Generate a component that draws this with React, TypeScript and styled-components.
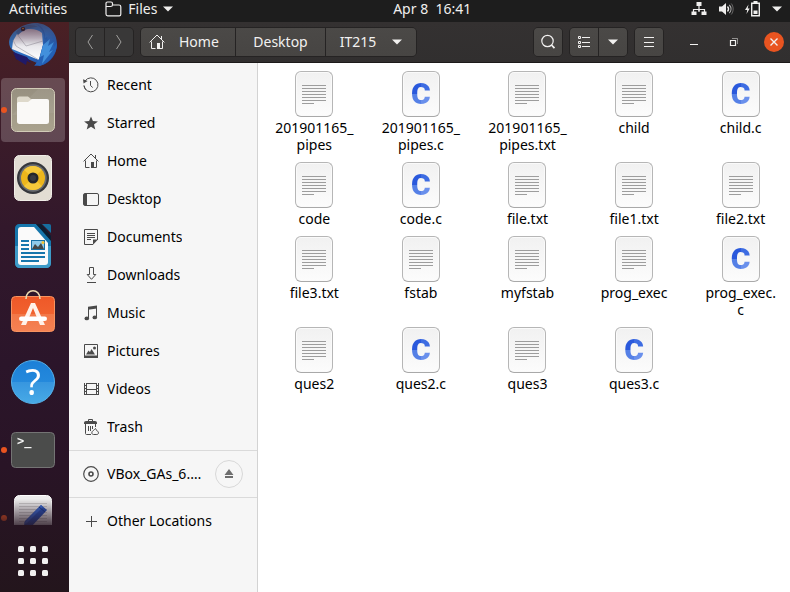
import React from "react";
import styled, { createGlobalStyle, css } from "styled-components";

const GlobalStyle = createGlobalStyle`
  *, *::before, *::after { box-sizing: border-box; }
  html, body, #root { height: 100%; }
  body {
    margin: 0;
    overflow: hidden;
    font-family: "Noto Sans", "Open Sans", sans-serif;
    font-size: 14px;
    line-height: 18px;
    background: #1d1d1d;
  }
  button {
    font: inherit;
    color: inherit;
    background: none;
    border: 0;
    padding: 0;
    margin: 0;
    cursor: pointer;
  }
  svg { display: block; flex: none; overflow: visible; }
`;

/* ---------- shell ---------- */

const Screen = styled.div`
  display: flex;
  flex-direction: column;
  height: 100vh;
`;

const TopBar = styled.header`
  display: flex;
  flex: none;
  align-items: center;
  justify-content: space-between;
  padding: 0 8px 4px 9px;
  background: #1d1d1d;
  color: #f0efee;
`;

const TopGroup = styled.div<{ $gap: number }>`
  display: flex;
  align-items: center;
  gap: ${(p) => p.$gap}px;
`;

const TopButton = styled.button`
  display: flex;
  align-items: center;
  gap: 6px;
  white-space: pre;
`;

const Workspace = styled.div`
  display: flex;
  flex: 1;
  min-height: 0;
`;

/* ---------- dock ---------- */

const Dock = styled.nav`
  display: flex;
  flex: none;
  flex-direction: column;
  width: 69px;
  background: linear-gradient(180deg, #4a2024 0%, #3c1c29 18%, #32182b 36%, #2b152a 60%, #291426 78%, #23151c 100%);
`;

const DockList = styled.div`
  display: flex;
  flex: 1;
  flex-direction: column;
  gap: 4px;
  min-height: 0;
  padding-left: 1px;
  overflow: hidden;
  mask-image: linear-gradient(180deg, rgba(0, 0, 0, 0.5), #000 24px, #000 calc(100% - 26px), rgba(0, 0, 0, 0.2));

  & > :first-child { margin-top: -12px; }
`;

const DockItem = styled.button<{ $active?: boolean; $running?: boolean }>`
  position: relative;
  display: flex;
  flex: none;
  align-items: center;
  justify-content: center;
  width: 64px;
  height: 64px;
  border-radius: 4px;
  background: ${(p) => (p.$active ? "rgba(255, 255, 255, 0.2)" : "none")};

  ${(p) =>
    p.$running &&
    css`
      &::before {
        content: "";
        position: absolute;
        left: 0;
        top: 29px;
        width: 6px;
        height: 6px;
        border-radius: 50%;
        background: #e95420;
      }
    `}
`;

const AppsButton = styled.button`
  display: flex;
  flex: none;
  justify-content: center;
  width: 66px;
  padding: 20px 0 15px;
`;

/* ---------- window ---------- */

const Window = styled.main`
  display: flex;
  flex: 1;
  flex-direction: column;
  min-width: 0;
`;

const HeaderBar = styled.div`
  display: flex;
  flex: none;
  align-items: center;
  gap: 6px;
  height: 41px;
  padding: 0 6px 1px;
  background: linear-gradient(180deg, #343131, #312f2f);
  border-bottom: 1px solid #1c1a1a;
  color: #f2f1f0;
`;

const ButtonGroup = styled.div`
  display: flex;
  flex: none;
  height: 30px;
  border: 1px solid #252323;
  border-radius: 5px;
  overflow: hidden;
  background: #252323;
  gap: 1px;
`;

const HeaderButton = styled.button<{ $dim?: boolean; $width?: number }>`
  display: flex;
  align-items: center;
  justify-content: center;
  gap: 16px;
  width: ${(p) => p.$width ?? 28}px;
  background: ${(p) => (p.$dim ? "#393838" : "linear-gradient(180deg, #4b4947, #474543)")};
  color: ${(p) => (p.$dim ? "#a09f9d" : "#f2f1f0")};
`;

const HomeButton = styled(HeaderButton)`
  justify-content: flex-start;
  gap: 14px;
  padding: 0 8px;
`;

const Spacer = styled.div`
  flex: 1;
`;

const WindowControls = styled.div`
  display: flex;
  flex: none;
  align-items: center;
  gap: 20px;
  margin-left: 14px;
`;

const ControlButton = styled.button<{ $close?: boolean }>`
  display: flex;
  align-items: center;
  justify-content: center;
  width: 20px;
  height: 20px;
  border-radius: 50%;
  background: ${(p) => (p.$close ? "#e95420" : "none")};
`;

const Body = styled.div`
  display: flex;
  flex: 1;
  min-height: 0;
`;

/* ---------- sidebar ---------- */

const Sidebar = styled.aside`
  flex: none;
  width: 189px;
  padding-top: 3px;
  background: #f6f6f6;
  border-right: 1px solid #d3d3d3;
  color: #000000;
`;

const PlaceRow = styled.div`
  display: flex;
  align-items: center;
  height: 38px;
  padding: 0 14px;
`;

const PlaceButton = styled.button`
  display: flex;
  flex: 1;
  align-items: center;
  gap: 8px;
  height: 100%;
  min-width: 0;
  text-align: left;
  color: inherit;

  svg { color: #4a4a4a; }
`;

const PlaceLabel = styled.span`
  overflow: hidden;
  white-space: nowrap;
`;

const Divider = styled.hr`
  height: 1px;
  margin: 4px 0;
  border: 0;
  background: #dadada;
`;

const EjectButton = styled.button`
  display: flex;
  flex: none;
  align-items: center;
  justify-content: center;
  width: 28px;
  height: 28px;
  border: 1px solid #d8d8d8;
  border-radius: 50%;
  color: #6e6e6e;
`;

/* ---------- file grid ---------- */

const FileGrid = styled.div`
  display: grid;
  flex: 1;
  grid-template-columns: repeat(5, minmax(0, 1fr));
  align-content: start;
  column-gap: 12px;
  row-gap: 9px;
  padding: 8px 2px 0 9px;
  background: #ffffff;
  color: #000000;
`;

const FileItem = styled.button`
  display: flex;
  flex-direction: column;
  align-items: center;
  justify-content: flex-start;
  gap: 2px;
  line-height: 17px;
`;

const Page = styled.span`
  display: flex;
  align-items: center;
  justify-content: center;
  width: 38px;
  height: 46px;
  border: 1px solid #b6b6b6;
  border-bottom-color: #a9a9a9;
  border-radius: 6px;
  background: linear-gradient(180deg, #f1f1f1, #fcfcfc);
  box-shadow: inset 0 0 0 1px #fafafa;
`;

const CLetter = styled.span`
  font: 900 30px/30px Roboto, sans-serif;
  color: transparent;
  background:
    linear-gradient(90deg, #2a59dc 50%, #3d6ce2 50%) 0 0 / 100% 50% no-repeat,
    linear-gradient(90deg, #5580e6 50%, #6a90ec 50%) 0 100% / 100% 50% no-repeat;
  background-clip: text;
  -webkit-background-clip: text;
`;

/* ---------- symbolic icons ---------- */

type IconProps = { children: React.ReactNode; size?: number };

const Symbolic = ({ children, size = 16 }: IconProps) => (
  <svg width={size} height={size} viewBox={`0 0 ${size} ${size}`} fill="none" stroke="currentColor" aria-hidden="true">
    {children}
  </svg>
);

const CaretIcon = () => (
  <svg width="10" height="6" viewBox="0 0 10 6" fill="currentColor" aria-hidden="true">
    <path d="M0 .5h10L5 5.5z" />
  </svg>
);

const HomeIcon = () => (
  <Symbolic>
    <path d="M.6 8.4 8 1l7.4 7.4M12.5 2v3.2M2.5 7.5v7h4M13.5 7.5v7H10" />
    <path d="M8 9h3v6H8z" fill="currentColor" stroke="none" />
  </Symbolic>
);

const RecentIcon = () => (
  <Symbolic>
    <path d="M2.1 4A7 7 0 1 1 1 8.6" />
    <path d="M1 8.6a7 7 0 0 0 2 4.3" />
    <path d="M7.5 4v4.5l2.2 2" />
    <path d="M0 2.2 4.6 4 .6 6.4z" fill="currentColor" stroke="none" />
  </Symbolic>
);

const StarIcon = () => (
  <Symbolic>
    <path
      d="m8 1.4 1.9 4.7 5 .3-3.9 3.2 1.3 4.9L8 11.8l-4.3 2.7L5 9.6 1.1 6.4l5-.3z"
      fill="currentColor"
      stroke="none"
    />
  </Symbolic>
);

const DesktopIcon = () => (
  <Symbolic>
    <rect x=".5" y="2.5" width="15" height="12" rx="1.5" />
    <path d="M1 3h3v11H1z" fill="currentColor" stroke="none" />
  </Symbolic>
);

const DocumentIcon = () => (
  <Symbolic>
    <path d="M10 15.5H1.5v-15h13v10.5" />
    <path d="M4 4.5h8M4 6.5h8M4 8.5h8M4 10.5h4" />
    <path d="M15 10.5h-5v5.3z" fill="currentColor" stroke="none" />
  </Symbolic>
);

const DownloadIcon = () => (
  <Symbolic>
    <path d="M6.5 .5h4v7h2.3L8.5 12.3 4.2 7.5h2.3zM4 15.5h9" />
  </Symbolic>
);

const MusicIcon = () => (
  <Symbolic>
    <path d="M5.5 13V2.5M13.5 12V1.5" />
    <path d="M5 1.800 14 .5v3L5 4.8z" fill="currentColor" stroke="none" />
    <ellipse cx="3.8" cy="13.4" rx="2.3" ry="1.9" fill="currentColor" stroke="none" />
    <ellipse cx="11.8" cy="12.4" rx="2.3" ry="1.9" fill="currentColor" stroke="none" />
  </Symbolic>
);

const PictureIcon = () => (
  <Symbolic>
    <path d="M1.5 14V1.5h13V14" />
    <path d="M1 12.5h14V15H1zM3 11.5l2.5-4 1.5 1.5 1.5-3 3.5 5.5z" fill="currentColor" stroke="none" />
    <circle cx="11.5" cy="5" r="1.5" fill="currentColor" stroke="none" />
  </Symbolic>
);

const VideoIcon = () => (
  <Symbolic>
    <path d="M3.5 2v12M13.5 2v12M3.5 2.5h10M3.5 8.5h10M3.5 13.5h10" />
    <path d="M1.5 2v12M15.5 2v12" strokeDasharray="2 1" />
    <path d="M1 4.500h2.500M1 7.500h2.500M1 10.500h2.500M1 13.500h2.500M13.500 4.500H16M13.500 7.500H16M13.500 10.500H16M13.500 13.500H16" />
  </Symbolic>
);

const TrashIcon = () => (
  <Symbolic>
    <path d="M5.5 2.5v-2h4v2" />
    <path d="M1 4c0-1.300.8-2 2-2h9c1.200 0 2 .7 2 2v1H1z" fill="currentColor" stroke="none" />
    <path d="M2.5 5v9.500c0 .6.4 1 1 1H8M5.500 7v5M7.500 7v5M9.500 7v3M12.500 5v3" />
    <path d="M12.500 9.500c-.6 1-3.700 2.500-3.700 4.300 0 1 .7 1.700 1.700 1.700h3.300c1 0 1.700-.7 1.700-1.700 0-1.500-2-1.700-3-4.300z" />
  </Symbolic>
);

const DiscIcon = () => (
  <Symbolic>
    <circle cx="8" cy="8" r="7.300" strokeWidth="1.200" />
    <circle cx="8" cy="8" r="2" strokeWidth="1.600" />
  </Symbolic>
);

const PlusIcon = () => (
  <Symbolic>
    <path d="M8.5 3v11M3 8.5h11" />
  </Symbolic>
);

const EjectIcon = () => (
  <svg width="10" height="10" viewBox="0 0 10 10" fill="currentColor" aria-hidden="true">
    <path d="M5 0l4.500 6h-9zM1 7h8v2H1z" />
  </svg>
);

const FolderIcon = () => (
  <svg width="17" height="16" viewBox="0 0 17 16" fill="none" stroke="currentColor" aria-hidden="true">
    <path
      d="M1 13V2.500C1 1.600 1.500 1 2.500 1H6c1 0 1.500.6 1.500 1.500V4H14c1.200 0 1.800.6 1.800 1.800v7.400c0 1-.6 1.600-1.600 1.600H2.700C1.600 14.800 1 14.200 1 13zM1 5.500h4.500c1.300 0 2-.6 2-1.500"
      strokeWidth="1.200"
    />
  </svg>
);

const NetworkIcon = () => (
  <Symbolic>
    <path d="M8 4v7M2.5 11V8.500h11V11" strokeWidth="1.200" />
    <path d="M5.500 1h5v4h-5zM.500 10.500h5V14h-5zM10.500 10.500h5V14h-5z" fill="currentColor" stroke="none" />
    <path d="M8 8v2" strokeWidth="1.200" />
  </Symbolic>
);

const VolumeIcon = () => (
  <Symbolic>
    <path d="M1 5.500h3L8 2v12l-4-3.500H1z" fill="currentColor" stroke="none" />
    <path d="M9.500 5.500c1.200 1.400 1.200 3.600 0 5" strokeWidth="1.300" />
    <path d="M11.300 3.800c2.200 2.400 2.200 6 0 8.400" strokeWidth="1.200" opacity=".7" />
    <path d="M13.200 2.500c2.600 3 2.600 8 0 11" opacity=".35" />
  </Symbolic>
);

const BatteryIcon = () => (
  <Symbolic>
    <path d="M3.500 3.500 0 9h2.200L1.500 13 4.700 7.500H2.700z" fill="currentColor" stroke="none" />
    <path d="M6.700 2.200h7.600v12.600H6.700z" strokeWidth="1.400" />
    <path d="M8.500 0h4v2h-4zM8.500 9.500h4v3.500h-4z" fill="currentColor" stroke="none" />
  </Symbolic>
);

const BackIcon = () => (
  <Symbolic>
    <path d="M10.500 1 6 8l4.500 7" />
  </Symbolic>
);

const ForwardIcon = () => (
  <Symbolic>
    <path d="m5.500 1 4.500 7-4.500 7" />
  </Symbolic>
);

const SearchIcon = () => (
  <Symbolic>
    <circle cx="7.5" cy="7" r="5.700" strokeWidth="1.200" />
    <path d="m11.500 11 3 3.200" strokeWidth="1.800" />
  </Symbolic>
);

const ListIcon = () => (
  <Symbolic>
    <path d="M2.500 2.500h2v2h-2zM2.500 7.500h2v2h-2zM2.500 11.500h2v2h-2zM6 3.500h8M6 8.500h8M6 12.500h8" />
  </Symbolic>
);

const MenuIcon = () => (
  <Symbolic>
    <path d="M3 3.500h10M3 8.500h10M3 12.500h10" />
  </Symbolic>
);

const MinimizeIcon = () => (
  <Symbolic>
    <path d="M4 10.500h8" />
  </Symbolic>
);

const RestoreIcon = () => (
  <Symbolic>
    <path d="M6 4.500h5.500V10" opacity=".5" />
    <path d="M4.500 6.500h5v5h-5z" strokeWidth="1.200" />
  </Symbolic>
);

const CloseIcon = () => (
  <Symbolic>
    <path d="m4.500 4.500 7 7m0-7-7 7" strokeWidth="1.400" />
  </Symbolic>
);

/* ---------- dock icons ---------- */

const ThunderbirdIcon = () => (
  <svg width="48" height="48" viewBox="0 0 48 48" aria-hidden="true">
    <defs>
      <linearGradient id="birdBody" x1="0" y1="0" x2="1" y2="1">
        <stop offset="0" stopColor="#3570b0" />
        <stop offset=".5" stopColor="#2d70c4" />
        <stop offset="1" stopColor="#1b3f94" />
      </linearGradient>
      <linearGradient id="birdMail" x1="0" y1="0" x2="0" y2="1">
        <stop offset="0" stopColor="#a79db4" />
        <stop offset=".5" stopColor="#e6e5ea" />
        <stop offset="1" stopColor="#ffffff" />
      </linearGradient>
    </defs>
    <path d="M25 5C37 4 48 13 48 26c0 11-7 18-14 21l-9 1 3-3-14-6C6 36 0 31 0 24 1 14 13 6 25 5z" fill="url(#birdBody)" />
    <path d="M4 34l3 7 10 6 1-4 4 2-4-6z" fill="#201a68" />
    <path d="M8 16c5-6 19-7 25-1l1 12-4 15L3 31l1-8z" fill="url(#birdMail)" />
    <path d="M8 16l9 12 17-5M4 22l3 6 23 14" fill="none" stroke="#8f8e98" strokeWidth=".8" opacity=".7" />
    <path d="M27 6c11 4 10 14 7 21l-4 14-4 6 5 1c11-4 17-13 17-23l-3 4-1-7-4 5-2-8-3 2c1-6-3-12-8-15z" fill="#2461b6" />
    <path d="M34 27l7-6-2 7 6-4-5 10 4-2-11 14 2-9-4 2z" fill="#4290dc" />
    <path d="M7 14C13 7 22 5 29 9c-7 0-14 2-20 8z" fill="#315f9c" />
    <circle cx="14" cy="11" r="2.200" fill="#241f35" />
    <circle cx="14" cy="10.500" r=".8" fill="#c88432" />
  </svg>
);

const FilesAppIcon = () => (
  <svg width="46" height="46" viewBox="0 0 46 46" aria-hidden="true">
    <defs>
      <linearGradient id="filesBack" x1="0" y1="0" x2="0" y2="1">
        <stop offset="0" stopColor="#979080" />
        <stop offset="1" stopColor="#aaa38e" />
      </linearGradient>
    </defs>
    <rect x="1.500" y="1.500" width="43" height="43" rx="5" fill="url(#filesBack)" stroke="#d2ccb8" />
    <path d="M2 28 28 2h12l4 4v20z" fill="#ffffff" opacity=".06" />
    <path d="M7 18v-6c0-1.600.8-2.500 2.500-2.500H18l3 2.500h16v6z" fill="#ded9cb" />
    <path d="M7 17c0-1.400.8-2 2-2h9l4-3h15c1.300 0 2 .8 2 2v20.500c0 1.700-1 2.500-2.500 2.500h-27C8 37 7 36 7 34.500z" fill="#faf9f7" />
  </svg>
);

const SpeakerIcon = () => (
  <svg width="48" height="48" viewBox="0 0 48 48" aria-hidden="true">
    <rect x="5.500" y="1.500" width="37" height="45" rx="5" fill="#e2ddd3" stroke="#f1eee8" />
    <circle cx="24" cy="24" r="16" fill="#35373c" />
    <circle cx="24" cy="24" r="13.700" fill="#6b6e72" />
    <circle cx="24" cy="24" r="12" fill="#edb61c" />
    <path d="M24 24 15 16a12 12 0 0 1 18 0zM24 24l9 8a12 12 0 0 1-18 0z" fill="#f6c93a" />
    <circle cx="24" cy="24" r="5.500" fill="#25272b" />
    <circle cx="24" cy="24" r="3" fill="#393b40" />
  </svg>
);

const WriterIcon = () => (
  <svg width="48" height="48" viewBox="0 0 48 48" aria-hidden="true">
    <path d="M10 2h17l15 15v24c0 3-2 5-5 5H11c-3 0-5-2-5-5V6c0-2 2-4 4-4z" fill="#1676ac" />
    <path d="M6 24h36v17c0 3-2 5-5 5H11c-3 0-5-2-5-5z" fill="#3d9bc8" />
    <path d="M12 5h13l14 16v19c0 2-1 3-3 3H12c-2 0-3-1-3-3V8c0-2 1-3 3-3z" fill="#fafafa" />
    <path d="M27 2l15 17v-5L32 2z" fill="#0b1e31" />
    <path d="M33 2h7c1.300 0 2 .7 2 2v7z" fill="#176f9f" />
    <path d="M12 19h8M12 23h8M12 27h8M12 31h24M12 35h24M12 39h18" stroke="#1676ac" strokeWidth="2" />
    <rect x="22.500" y="18.500" width="13" height="9" fill="#8fcbea" stroke="#1670a5" />
    <path d="M23 27l3-5 3 3 3-4 3 6z" fill="#454847" />
    <circle cx="34" cy="20.500" r="1.500" fill="#f5c431" />
  </svg>
);

const SoftwareIcon = () => (
  <svg width="48" height="48" viewBox="0 0 48 48" aria-hidden="true">
    <defs>
      <linearGradient id="bag" x1="0" y1="0" x2="0" y2="1">
        <stop offset="0" stopColor="#ee5828" />
        <stop offset=".5" stopColor="#f1622f" />
        <stop offset=".5" stopColor="#f27747" />
        <stop offset="1" stopColor="#f58254" />
      </linearGradient>
    </defs>
    <rect x="2.500" y="6.500" width="43" height="35" rx="4" fill="url(#bag)" stroke="#f79360" />
    <path d="M17 9C17-2 31-2 31 9" fill="none" stroke="#ecd9ae" strokeWidth="1.600" />
    <path d="M22 13h4l10 22h-5L24 18l-7 17h-5z" fill="#fff1e9" />
    <rect x="10" y="26.500" width="28" height="4.500" rx="2.250" fill="#ffffff" />
  </svg>
);

const HelpIcon = () => (
  <svg width="48" height="48" viewBox="0 0 48 48" aria-hidden="true">
    <defs>
      <linearGradient id="helpDisc" x1="0" y1="0" x2="0" y2="1">
        <stop offset="0" stopColor="#1c80d8" />
        <stop offset=".5" stopColor="#2489dc" />
        <stop offset=".5" stopColor="#3796df" />
        <stop offset="1" stopColor="#48aae6" />
      </linearGradient>
    </defs>
    <circle cx="24" cy="24" r="21.500" fill="url(#helpDisc)" stroke="#56b1ea" />
    <text x="24" y="37" textAnchor="middle" fontFamily="Noto Sans, sans-serif" fontSize="36" fill="#ffffff">
      ?
    </text>
  </svg>
);

const TerminalIcon = () => (
  <svg width="48" height="48" viewBox="0 0 48 48" aria-hidden="true">
    <rect x="2.500" y="6.500" width="43" height="35" rx="4" fill="#4b4c4b" stroke="#747474" />
    <text x="8" y="19" fontFamily="DejaVu Sans Mono, monospace" fontWeight="700" fontSize="12" fill="#f4f4f4">
      &gt;_
    </text>
  </svg>
);

const EditorIcon = () => (
  <svg width="48" height="48" viewBox="0 0 48 48" aria-hidden="true">
    <rect x="5.500" y="1.500" width="37" height="45" rx="5" fill="#ededed" stroke="#ffffff" />
    <path
      d="M10 9.500h28M10 12.500h28M10 15.500h28M10 18.500h28M10 21.500h28M10 24.500h28M10 27.500h28"
      stroke="#c9c9c9"
    />
    <path d="M32 11l6 5-16 17-8 3 2-9z" fill="#2551b8" />
    <path d="M32 11l2 2-17 17-2-1z" fill="#376ad4" />
    <path d="M30 13l6 5" stroke="#17388a" />
  </svg>
);

const AppsIcon = () => (
  <svg width="32" height="32" viewBox="0 0 32 32" fill="#f1f0f0" aria-hidden="true">
    {[1, 13, 25].map((y) =>
      [1, 13, 25].map((x) => <rect key={`${x}-${y}`} x={x} y={y} width="6" height="6" rx="1.500" />),
    )}
  </svg>
);

const TextLinesIcon = () => (
  <svg width="24" height="19" viewBox="0 0 24 19" aria-hidden="true">
    <path d="M0 .5h24M0 3.500h24M0 6.500h24M0 9.500h24M0 12.500h24M0 15.500h24M0 18.500h12" stroke="#9d9d9d" />
  </svg>
);

/* ---------- data ---------- */

const dockApps = [
  { name: "Thunderbird Mail", icon: <ThunderbirdIcon /> },
  { name: "Files", icon: <FilesAppIcon />, active: true, running: true },
  { name: "Rhythmbox", icon: <SpeakerIcon /> },
  { name: "LibreOffice Writer", icon: <WriterIcon /> },
  { name: "Ubuntu Software", icon: <SoftwareIcon /> },
  { name: "Help", icon: <HelpIcon /> },
  { name: "Terminal", icon: <TerminalIcon />, running: true },
  { name: "Text Editor", icon: <EditorIcon />, running: true },
];

const places = [
  { label: "Recent", icon: <RecentIcon /> },
  { label: "Starred", icon: <StarIcon /> },
  { label: "Home", icon: <HomeIcon /> },
  { label: "Desktop", icon: <DesktopIcon /> },
  { label: "Documents", icon: <DocumentIcon /> },
  { label: "Downloads", icon: <DownloadIcon /> },
  { label: "Music", icon: <MusicIcon /> },
  { label: "Pictures", icon: <PictureIcon /> },
  { label: "Videos", icon: <VideoIcon /> },
  { label: "Trash", icon: <TrashIcon /> },
];

const files: string[][] = [
  ["201901165_", "pipes"],
  ["201901165_", "pipes.c"],
  ["201901165_", "pipes.txt"],
  ["child"],
  ["child.c"],
  ["code"],
  ["code.c"],
  ["file.txt"],
  ["file1.txt"],
  ["file2.txt"],
  ["file3.txt"],
  ["fstab"],
  ["myfstab"],
  ["prog_exec"],
  ["prog_exec.", "c"],
  ["ques2"],
  ["ques2.c"],
  ["ques3"],
  ["ques3.c"],
];

const File = ({ lines }: { lines: string[] }) => {
  const isSource = lines.join("").endsWith(".c");
  return (
    <FileItem>
      <Page>{isSource ? <CLetter aria-hidden="true">C</CLetter> : <TextLinesIcon />}</Page>
      <span>
        {lines.map((line, i) => (
          <React.Fragment key={line}>
            {i > 0 && <br />}
            {line}
          </React.Fragment>
        ))}
      </span>
    </FileItem>
  );
};

export default function App() {
  return (
    <Screen>
      <GlobalStyle />
      <TopBar>
        <TopGroup $gap={38}>
          <TopButton>Activities</TopButton>
          <TopButton>
            <FolderIcon />
            Files
            <CaretIcon />
          </TopButton>
        </TopGroup>
        <TopButton>{"Apr 8  16:41"}</TopButton>
        <TopButton aria-label="System menu">
          <TopGroup $gap={11}>
            <NetworkIcon />
            <VolumeIcon />
            <BatteryIcon />
            <CaretIcon />
          </TopGroup>
        </TopButton>
      </TopBar>

      <Workspace>
        <Dock aria-label="Dock">
          <DockList>
            {dockApps.map((app) => (
              <DockItem key={app.name} aria-label={app.name} $active={app.active} $running={app.running}>
                {app.icon}
              </DockItem>
            ))}
          </DockList>
          <AppsButton aria-label="Show Applications">
            <AppsIcon />
          </AppsButton>
        </Dock>

        <Window>
          <HeaderBar>
            <ButtonGroup>
              <HeaderButton $dim aria-label="Back">
                <BackIcon />
              </HeaderButton>
              <HeaderButton $dim aria-label="Forward">
                <ForwardIcon />
              </HeaderButton>
            </ButtonGroup>
            <ButtonGroup>
              <HomeButton $width={94}>
                <HomeIcon />
                Home
              </HomeButton>
              <HeaderButton $width={89}>Desktop</HeaderButton>
              <HeaderButton $width={90}>
                IT215
                <CaretIcon />
              </HeaderButton>
            </ButtonGroup>
            <Spacer />
            <ButtonGroup>
              <HeaderButton aria-label="Search">
                <SearchIcon />
              </HeaderButton>
            </ButtonGroup>
            <ButtonGroup>
              <HeaderButton aria-label="List view">
                <ListIcon />
              </HeaderButton>
              <HeaderButton aria-label="View options">
                <CaretIcon />
              </HeaderButton>
            </ButtonGroup>
            <ButtonGroup>
              <HeaderButton aria-label="Menu">
                <MenuIcon />
              </HeaderButton>
            </ButtonGroup>
            <WindowControls>
              <ControlButton aria-label="Minimize">
                <MinimizeIcon />
              </ControlButton>
              <ControlButton aria-label="Restore">
                <RestoreIcon />
              </ControlButton>
              <ControlButton $close aria-label="Close">
                <CloseIcon />
              </ControlButton>
            </WindowControls>
          </HeaderBar>

          <Body>
            <Sidebar>
              {places.map((place) => (
                <PlaceRow key={place.label}>
                  <PlaceButton>
                    {place.icon}
                    <PlaceLabel>{place.label}</PlaceLabel>
                  </PlaceButton>
                </PlaceRow>
              ))}
              <Divider />
              <PlaceRow>
                <PlaceButton>
                  <DiscIcon />
                  <PlaceLabel>VBox_GAs_6.…</PlaceLabel>
                </PlaceButton>
                <EjectButton aria-label="Eject">
                  <EjectIcon />
                </EjectButton>
              </PlaceRow>
              <Divider />
              <PlaceRow>
                <PlaceButton>
                  <PlusIcon />
                  <PlaceLabel>Other Locations</PlaceLabel>
                </PlaceButton>
              </PlaceRow>
            </Sidebar>

            <FileGrid>
              {files.map((lines) => (
                <File key={lines.join("")} lines={lines} />
              ))}
            </FileGrid>
          </Body>
        </Window>
      </Workspace>
    </Screen>
  );
}
